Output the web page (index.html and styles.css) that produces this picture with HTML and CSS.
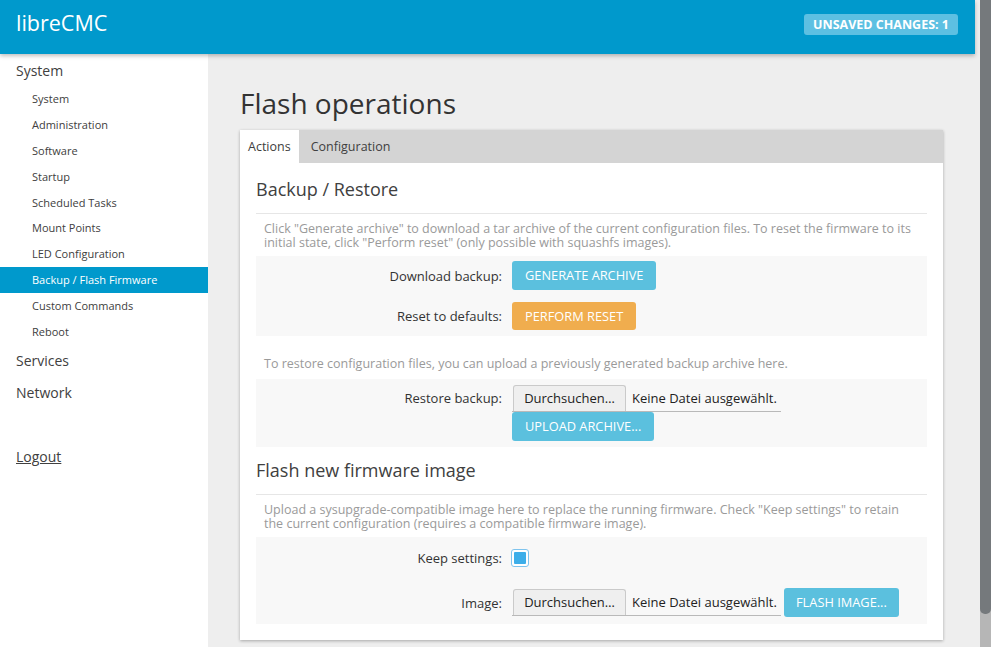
FILE: index.html
```html
<!DOCTYPE html>
<html lang="en">
<head>
<meta charset="utf-8">
<title>Flash operations - libreCMC</title>
<link rel="stylesheet" href="styles.css">
</head>
<body>
<div class="app">
  <div class="page">
    <header class="topbar">
      <a class="brand">libreCMC</a>
      <span class="badge">UNSAVED CHANGES: 1</span>
    </header>
    <div class="body">
      <nav class="sidebar">
        <div class="top">System</div>
        <ul class="sub">
          <li>System</li>
          <li>Administration</li>
          <li>Software</li>
          <li>Startup</li>
          <li>Scheduled Tasks</li>
          <li>Mount Points</li>
          <li>LED Configuration</li>
          <li class="active">Backup / Flash Firmware</li>
          <li>Custom Commands</li>
          <li>Reboot</li>
        </ul>
        <div class="top">Services</div>
        <div class="top">Network</div>
        <div class="top logout"><u>Logout</u></div>
      </nav>
      <main class="main">
        <h2 class="title">Flash operations</h2>
        <div class="panel">
          <div class="tabs">
            <span class="tab active">Actions</span>
            <span class="tab">Configuration</span>
          </div>
          <div class="content">
            <h3 class="section">Backup / Restore</h3>
            <p class="desc">Click "Generate archive" to download a tar archive of the current configuration files. To reset the firmware to its initial state, click "Perform reset" (only possible with squashfs images).</p>
            <div class="box box-a">
              <div class="row">
                <label class="lbl">Download backup:</label>
                <div class="field"><span class="btn blue">Generate archive</span></div>
              </div>
              <div class="row">
                <label class="lbl">Reset to defaults:</label>
                <div class="field"><span class="btn orange">Perform reset</span></div>
              </div>
            </div>
            <p class="desc desc-gap">To restore configuration files, you can upload a previously generated backup archive here.</p>
            <div class="box box-b">
              <div class="row row-top">
                <label class="lbl lbl-file">Restore backup:</label>
                <div class="field col">
                  <div class="file"><span class="browse">Durchsuchen…</span><span class="fname">Keine Datei ausgewählt.</span></div>
                  <span class="btn blue">Upload archive...</span>
                </div>
              </div>
            </div>
            <h3 class="section section-2">Flash new firmware image</h3>
            <p class="desc">Upload a sysupgrade-compatible image here to replace the running firmware. Check "Keep settings" to retain the current configuration (requires a compatible firmware image).</p>
            <div class="box box-c">
              <div class="row row-tall">
                <label class="lbl">Keep settings:</label>
                <div class="field"><span class="check"><span class="check-fill"></span></span></div>
              </div>
              <div class="row row-tall">
                <label class="lbl">Image:</label>
                <div class="field">
                  <div class="file"><span class="browse">Durchsuchen…</span><span class="fname">Keine Datei ausgewählt.</span></div>
                  <span class="btn blue flash">Flash image...</span>
                </div>
              </div>
            </div>
          </div>
        </div>
      </main>
    </div>
  </div>
  <div class="scrollbar"><div class="thumb"></div></div>
</div>
</body>
</html>
```

FILE: styles.css
```css
* { box-sizing: border-box; }
html, body { margin: 0; padding: 0; height: 647px; overflow: hidden; }
body {
  font-family: "Open Sans", "Noto Sans", sans-serif;
  color: #404040;
  background: #eeeeee;
}
.app { display: flex; height: 647px; }
.page { flex: 1; display: flex; flex-direction: column; background: #eeeeee; min-width: 0; }
.topbar {
  height: 54px;
  margin-right: 5px;
  background: #0099cc;
  display: flex;
  align-items: center;
  justify-content: space-between;
  padding: 0 17px 8px 16px;
  box-shadow: 0 2px 4px rgba(0,0,0,0.25);
  position: relative;
  z-index: 2;
}
.brand { color: #fff; font-size: 21.5px; line-height: 30px; }
.badge {
  background: #5dc0e2;
  color: #fff;
  font-weight: 700;
  font-size: 12.5px;
  line-height: 21px;
  height: 21px;
  padding: 0 9px;
  border-radius: 3px;
  margin-top: 2px;
}
.body { flex: 1; display: flex; min-height: 0; }
.sidebar { width: 208px; background: #fff; padding-top: 0; flex-shrink: 0; }
.top { height: 32px; line-height: 32px; font-size: 14px; padding-left: 16px; color: #404040; }
.sidebar > .top:first-child { height: 32px; line-height: 34px; }
.logout { margin-top: 32px; }
.sub { list-style: none; margin: 0; padding: 0; }
.sub li { height: 25.9px; line-height: 25.9px; font-size: 11px; padding-left: 32px; color: #404040; }
.sub li.active { background: #0099cc; color: #fff; }
.main { flex: 1; padding: 0 37px 0 32px; min-width: 0; }
.title { font-size: 28px; font-weight: 400; line-height: 36px; margin: 31px 0 9px; color: #333; }
.panel { background: #fff; box-shadow: 0 1px 3px rgba(0,0,0,0.3); padding-bottom: 16px; }
.tabs { display: flex; background: #d4d4d4; height: 33px; }
.tab { font-size: 12.5px; line-height: 33px; padding: 0 8px 0 12px; color: #404040; }
.tab.active { background: #fff; padding: 0 8px; }
.content { padding: 0 16px; }
.section { font-size: 18px; font-weight: 400; line-height: 24px; margin: 14px 0 0; padding-bottom: 12px; border-bottom: 1px solid #e6e6e6; color: #404040; }
.section-2 { margin-top: 11px; }
.desc { margin: 0; font-size: 12.5px; line-height: 14px; color: #9a9a9a; padding: 8px 8px 6px; }
.desc-gap { padding-top: 21px; padding-bottom: 8px; }
.box { background: #f8f8f8; display: flex; flex-direction: column; }
.box-a { padding: 5px 0 6px; gap: 12px; }
.box-b { padding: 6px 0 6px; }
.box-c { padding: 6px 0 7px; gap: 16px; }
.row { display: flex; align-items: center; min-height: 28px; }
.row-tall { min-height: 29px; }
.row-top { align-items: flex-start; }
.lbl { width: 246px; text-align: right; font-size: 13px; color: #333; margin-right: 10px; }
.lbl-file { line-height: 27px; }
.field { display: flex; align-items: center; }
.col { flex-direction: column; align-items: flex-start; }
.btn {
  display: inline-block;
  height: 29px;
  line-height: 29px;
  padding: 0 13px;
  font-size: 12.8px;
  text-transform: uppercase;
  color: #fff;
  border-radius: 3px;
  white-space: nowrap;
}
.blue { background: #5bc0de; }
.orange { background: #f0ad4e; height: 28px; line-height: 28px; }
.flash { margin-left: 3px; padding: 0 12px; }
.file {
  display: flex;
  align-items: flex-start;
  width: 269px;
  border-bottom: 1px solid #b9b9b9;
  height: 27px;
}
.browse {
  margin-left: 1px;
  width: 113px;
  height: 26px;
  line-height: 24px;
  background: #efefef;
  border: 1px solid #cacaca;
  border-bottom: 0;
  border-radius: 3px 3px 0 0;
  font-size: 13px;
  color: #222;
  text-align: center;
}
.fname { font-size: 13px; line-height: 26px; color: #222; margin-left: 6px; white-space: nowrap; }
.check {
  display: inline-block;
  width: 18px;
  height: 18px;
  border: 1px solid #7fc4ee;
  border-radius: 3px;
  background: #fff;
  padding: 2px;
  margin-left: -1px;
}
.check-fill { display: block; width: 100%; height: 100%; background: #3daee9; border-radius: 1px; }
.scrollbar { width: 11px; background: #b6b6b6; flex-shrink: 0; }
.thumb { height: 614px; background: #75797c; border-radius: 0 0 5px 5px; }
```
